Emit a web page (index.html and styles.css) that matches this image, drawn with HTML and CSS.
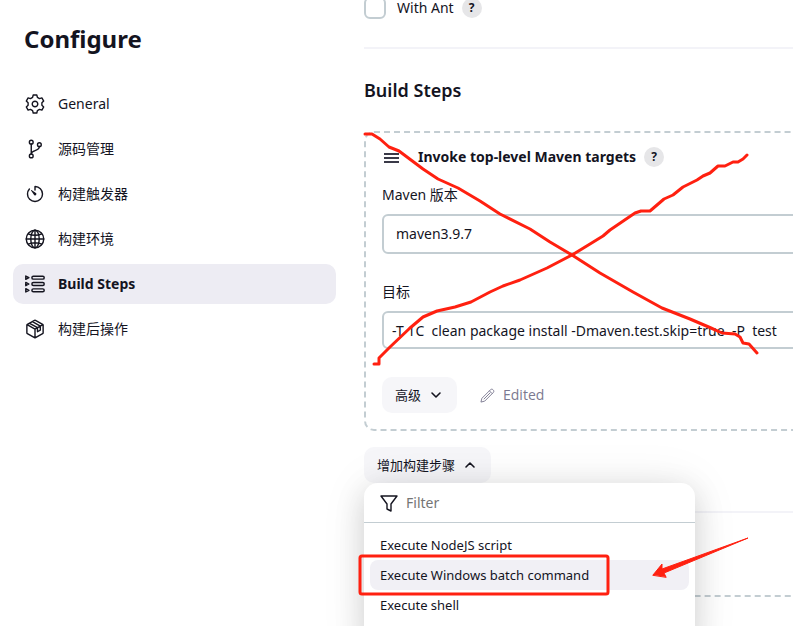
FILE: index.html
```html
<!DOCTYPE html>
<html lang="zh">
<head>
  <meta charset="utf-8">
  <title>Configure</title>
  <link rel="stylesheet" href="styles.css">
</head>
<body>
  <div class="page">
    <aside class="sidebar">
      <h1>Configure</h1>
      <nav class="tasks">
        <a class="task" href="#general">
          <svg class="icon gear" viewBox="-10 -10 20 20"><path d="M-1.8-9H1.8L2.4-6.6 4.5-5.4 6.9-6.1 8.7-2.9 6.9-1.2V1.2L8.7 2.9 6.9 6.1 4.5 5.4 2.4 6.6 1.8 9H-1.8L-2.4 6.6-4.5 5.400-6.9 6.100-8.700 2.900-6.900 1.200V-1.200L-8.700-2.900-6.900-6.100-4.500-5.400-2.400-6.600z"/><circle r="2.800"/></svg>
          <span>General</span>
        </a>
        <a class="task" href="#scm">
          <svg class="icon" viewBox="0 0 512 512"><circle cx="160" cy="80" r="48"/><circle cx="160" cy="432" r="48"/><circle cx="368" cy="144" r="48"/><path d="M160 128v256M368 192c0 128-208 80-208 192"/></svg>
          <span>源码管理</span>
        </a>
        <a class="task" href="#triggers">
          <svg class="icon" viewBox="0 0 512 512"><path d="M112.91 128A191.85 191.85 0 0064 254c-1.180 106.350 85.650 193.800 192 194 106.200.2 192-85.830 192-192 0-104.540-83.550-189.610-187.500-192a4.360 4.360 0 00-4.500 4.370V152"/><path class="solid" d="M233.380 278.630l-79-113a8.130 8.130 0 0111.320-11.320l113 79a32.500 32.500 0 01-37.250 53.260 33.210 33.210 0 01-8.070-7.940z"/></svg>
          <span>构建触发器</span>
        </a>
        <a class="task" href="#environment">
          <svg class="icon" viewBox="0 0 512 512"><circle cx="256" cy="256" r="224"/><ellipse cx="256" cy="256" rx="108" ry="224"/><path d="M256 32v448M32 256h448M86 122c95 50 245 50 340 0M86 390c95-50 245-50 340 0"/></svg>
          <span>构建环境</span>
        </a>
        <a class="task active" href="#build-steps">
          <svg class="icon" viewBox="0 0 512 512"><rect x="176" y="56" width="316" height="76" rx="38"/><rect x="176" y="218" width="316" height="76" rx="38"/><rect x="176" y="380" width="316" height="76" rx="38"/><path d="M20 52l80 42-80 42zM20 214l80 42-80 42zM20 376l80 42-80 42z"/></svg>
          <span>Build Steps</span>
        </a>
        <a class="task" href="#post-build">
          <svg class="icon" viewBox="0 0 512 512"><path d="M464 356V156a24 24 0 00-12-20L268 34a24 24 0 00-24 0L60 136a24 24 0 00-12 20v200a24 24 0 0012 20l184 102a24 24 0 0024 0l184-102a24 24 0 0012-20zM54 146l202 112 202-112M256 474V258M118 110l202 112v104l72-42V182L190 70"/></svg>
          <span>构建后操作</span>
        </a>
      </nav>
    </aside>

    <main class="content">
      <div class="option">
        <input type="checkbox" id="withAnt">
        <label for="withAnt">With Ant</label>
        <button class="help" type="button">?</button>
      </div>

      <hr>

      <section id="build-steps">
        <h2>Build Steps</h2>

        <div class="step">
          <div class="step-header">
            <svg class="handle" viewBox="0 0 18 18"><path d="M2 6h15M2 10h15M2 14h15"/></svg>
            <h3>Invoke top-level Maven targets</h3>
            <button class="help" type="button">?</button>
          </div>
          <label class="field-label" for="mavenVersion">Maven 版本</label>
          <select class="field" id="mavenVersion">
            <option>maven3.9.7</option>
          </select>
          <label class="field-label" for="targets">目标</label>
          <input class="field" type="text" id="targets" value="-T 1C  clean package install -Dmaven.test.skip=true  -P  test">
          <div class="step-footer">
            <button class="button" type="button">高级
              <svg class="chevron" viewBox="0 0 12 12"><path d="M2 4l4 4 4-4"/></svg>
            </button>
            <span class="edited">
              <svg class="pencil" viewBox="0 0 16 16"><path d="M1 15l1-4L11 2c1-1 2-1 3 0s1 2 0 3l-9 9zM10 3l3 3M4 12l7-7"/></svg>
              Edited
            </span>
          </div>
        </div>

        <div class="dropdown">
          <button class="button" type="button">增加构建步骤
            <svg class="chevron" viewBox="0 0 12 12"><path d="M2 8l4-4 4 4"/></svg>
          </button>
          <div class="menu">
            <div class="menu-filter">
              <svg class="funnel" viewBox="0 0 18 18"><path d="M1 2h16l-6 8v7l-4-2v-5z"/></svg>
              <input type="text" placeholder="Filter" aria-label="Filter">
            </div>
            <div class="menu-items">
              <button type="button">Execute NodeJS script</button>
              <button type="button" class="selected">Execute Windows batch command</button>
              <button type="button">Execute shell</button>
            </div>
          </div>
        </div>
      </section>

      <hr>

      <section class="post-build" id="post-build"></section>
    </main>
  </div>

  <svg class="marks" viewBox="0 0 793 626">
    <path d="M365 134H372L380 139 389 147 399 151 423 169 438 179 458 188 480 201 500 214 530 229 550 242 572 255 600 273 633 292 662 308 690 319 711 328 722 333 735 334 740 337 743 343 749 344 757 353"/>
    <path d="M374 364H379V358L390 347 410 328 423 317 437 311 455 307 471 302 490 292 503 286 520 280 547 268 572 255 590 244 603 236 610 230 635 213 641 211H650L664 199 673 195 683 187 697 180 703 176 710 173 718 166H725L733 162H738L743 159 747 155"/>
    <rect x="360" y="556" width="248" height="38" rx="2"/>
    <path class="arrow" d="M653 575L662 564V569L748 538 664 573 666 577z"/>
  </svg>
</body>
</html>
```

FILE: styles.css
```css
* {
  box-sizing: border-box;
}

body {
  margin: 0;
  height: 100vh;
  overflow: hidden;
  background: #fff;
  color: #14141f;
  font-family: "Noto Sans", "Noto Sans CJK SC", sans-serif;
  font-size: 14px;
  line-height: 20px;
}

button,
input,
select {
  font: inherit;
  color: inherit;
}

h1,
h2,
h3 {
  margin: 0;
}

.page {
  display: flex;
  gap: 28px;
  padding-left: 13px;
}

/* sidebar */
.sidebar {
  flex: 0 0 323px;
  padding-top: 24px;
}

.sidebar h1 {
  padding-left: 11px;
  margin-bottom: 30px;
  font-size: 24px;
  line-height: 30px;
}

.tasks {
  display: flex;
  flex-direction: column;
  gap: 5px;
}

.task {
  display: flex;
  align-items: center;
  gap: 13px;
  height: 40px;
  padding: 0 12px;
  border-radius: 10px;
  color: #14141f;
  text-decoration: none;
}

.task.active {
  background: #edecf3;
  font-weight: 700;
}

.icon {
  width: 20px;
  height: 20px;
  fill: none;
  stroke: currentColor;
  stroke-width: 36;
  stroke-linecap: round;
  stroke-linejoin: round;
}

.icon.gear {
  stroke-width: 1.4;
}

.icon .solid {
  fill: currentColor;
  stroke: none;
}

/* main column runs past the right edge of the window */
.content {
  flex: 1;
  min-width: 0;
  margin: -3px -24px 0 0;
}

.option {
  display: flex;
  align-items: center;
  height: 22px;
}

.option input {
  appearance: none;
  width: 22px;
  height: 22px;
  margin: 0 11px 0 0;
  border: 2px solid #c3cdd2;
  border-radius: 6px;
}

.help {
  width: 20px;
  height: 20px;
  margin-left: 8px;
  padding: 0;
  border: none;
  border-radius: 50%;
  background: #e6e6e8;
  font-size: 12px;
  font-weight: 700;
  line-height: 20px;
}

hr {
  height: 2px;
  margin: 28px 0;
  border: none;
  background: #f3f3f8;
}

h2 {
  margin-bottom: 28px;
  font-size: 18px;
  font-weight: 600;
  line-height: 26px;
}

.step {
  padding: 14px 16px 16px;
  border: 2px dashed #c3cdd2;
  border-radius: 10px;
}

.step-header {
  display: flex;
  align-items: center;
  height: 20px;
  margin-bottom: 18px;
}

.step-header h3 {
  margin-left: 18px;
  font-size: 14px;
  font-weight: 700;
}

.handle {
  width: 18px;
  height: 18px;
  fill: none;
  stroke: #3a3a48;
  stroke-width: 2;
}

.field-label {
  display: block;
  margin-bottom: 9px;
}

.field {
  display: block;
  width: 100%;
  height: 38px;
  padding: 0 8px;
  border: 2px solid #c3cdd2;
  border-radius: 6px;
  background: #fff;
}

select.field {
  appearance: none;
  height: 40px;
  margin-bottom: 28px;
  padding: 0 12px;
}

.step-footer {
  display: flex;
  align-items: center;
  gap: 23px;
  margin-top: 28px;
}

.button {
  display: inline-flex;
  align-items: center;
  gap: 9px;
  height: 36px;
  padding: 0 15px 0 13px;
  border: none;
  border-radius: 10px;
  background: #f6f6f9;
  font-size: 13px;
}

.chevron {
  width: 12px;
  height: 12px;
  fill: none;
  stroke: currentColor;
  stroke-width: 1.6;
  stroke-linecap: round;
  stroke-linejoin: round;
}

.edited {
  display: flex;
  align-items: center;
  gap: 8px;
  color: #7b7990;
  font-family: "Open Sans", sans-serif;
}

.pencil {
  width: 15px;
  height: 15px;
  fill: none;
  stroke: currentColor;
  stroke-linejoin: round;
}

/* add step dropdown */
.dropdown {
  display: flex;
  position: relative;
  margin-top: 16px;
}

.menu {
  position: absolute;
  top: 100%;
  left: 0;
  width: 331px;
  padding-bottom: 28px;
  border-radius: 14px;
  background: #fff;
  box-shadow: 0 8px 30px rgba(0, 0, 0, 0.15), 0 0 50px rgba(0, 0, 0, 0.07);
}

.menu-filter {
  display: flex;
  align-items: center;
  gap: 8px;
  height: 40px;
  padding: 0 16px;
  border-bottom: 1px solid #c3cdd2;
}

.menu-filter input {
  flex: 1;
  min-width: 0;
  padding: 0;
  border: none;
  outline: none;
  background: none;
}

.menu-filter input::placeholder {
  color: #757575;
}

.funnel {
  width: 18px;
  height: 18px;
  fill: none;
  stroke: #14141f;
  stroke-width: 1.4;
  stroke-linejoin: round;
}

.menu-items {
  display: flex;
  flex-direction: column;
  padding: 7px 6px;
}

.menu-items button {
  height: 30px;
  padding: 0 10px;
  border: none;
  border-radius: 8px;
  background: none;
  font-size: 13px;
  text-align: left;
}

.menu-items .selected {
  background: #f1f0f5;
}

.post-build {
  height: 100px;
  margin-top: 82px;
  border: 2px dashed #c3cdd2;
  border-radius: 10px;
}

/* hand-drawn marks over the page */
.marks {
  position: absolute;
  top: 0;
  left: 0;
  width: 793px;
  height: 626px;
  fill: none;
  stroke: #ff2010;
  stroke-width: 3;
  stroke-linecap: round;
  stroke-linejoin: round;
  pointer-events: none;
}

.marks .arrow {
  fill: #ff2010;
  stroke-width: 1;
}
```
